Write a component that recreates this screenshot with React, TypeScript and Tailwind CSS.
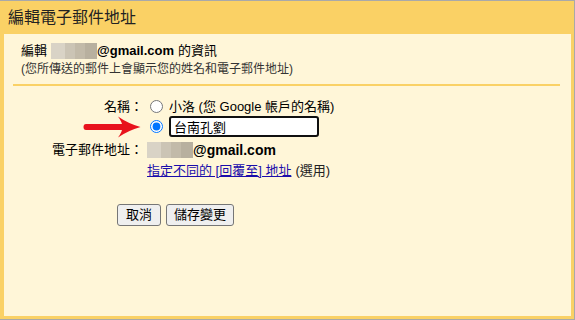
import { useState } from "react";

const font = "font-['Liberation_Sans','Noto_Sans_CJK_TC',sans-serif]";

function Blur({ className }: { className?: string }) {
  return (
    <span className={`inline-flex h-[16px] w-[46px] align-middle ${className ?? ""}`}>
      <span className="h-full w-[14px] bg-[#d9d3c6]" />
      <span className="h-full w-[10px] bg-[#cbc4b5]" />
      <span className="h-full w-[10px] bg-[#c2baa9]" />
      <span className="h-full w-[12px] bg-[#b8b09f]" />
    </span>
  );
}

function Arrow() {
  return (
    <svg width="58" height="22" viewBox="0 0 58 22" className="block">
      <path d="M3 8 L40 8 L40 14 L3 14 Q0.5 14 0.5 11 Q0.5 8 3 8 Z" fill="#e8121c" />
      <path d="M35 0.5 Q45 7.5 57.5 11 Q45 14.5 35 21.5 Q39.5 15.5 39.5 11 Q39.5 6.5 35 0.5 Z" fill="#e8121c" />
    </svg>
  );
}

export default function App() {
  const [choice, setChoice] = useState("custom");
  const [name, setName] = useState("台南孔劉");

  return (
    <div className={`flex h-[320px] w-[575px] flex-col border-y border-r border-[#a9a9a9] bg-[#fad165] pb-[3px] pl-[4px] pr-[3px] ${font}`}>
      {/* header */}
      <div className="flex h-[33px] shrink-0 items-center pl-[4px] text-[16px] text-[#222]">
        編輯電子郵件地址
      </div>

      <div className="flex-1 bg-[#fff6d8] pt-[8px]">
        {/* info */}
        <div className="px-[17px]">
          <div className="flex items-center text-[13px] leading-[17px] text-black">
            <span>編輯</span>
            <Blur className="ml-[4px]" />
            <span className="font-bold">@gmail.com</span>
            <span className="ml-[4px]">的資訊</span>
          </div>
          <div className="mt-[2px] text-[12px] leading-[16px] text-[#333]">
            (您所傳送的郵件上會顯示您的姓名和電子郵件地址)
          </div>
        </div>
        <div className="ml-[9px] mr-[11px] mt-[7px] h-[2px] bg-[#fad165]" />

        {/* form */}
        <div className="mt-[12px] grid grid-cols-[141px_1fr] text-[13px] text-black">
          <div className="flex h-[17px] items-center justify-end pr-[2px]">名稱：</div>
          <label className="flex h-[17px] items-center">
            <input
              type="radio"
              name="n"
              checked={choice === "account"}
              onChange={() => setChoice("account")}
              className="ml-[5px] h-[13px] w-[13px] accent-[#0075ff]"
            />
            <span className="ml-[6px]">小洛 (您 Google 帳戶的名稱)</span>
          </label>

          <div className="mt-[1px] flex h-[21px] items-center justify-end pr-[4px]">
            <Arrow />
          </div>
          <div className="mt-[1px] flex h-[21px] items-center">
            <input
              type="radio"
              name="n"
              checked={choice === "custom"}
              onChange={() => setChoice("custom")}
              className="ml-[5px] h-[13px] w-[13px] accent-[#0075ff]"
            />
            <input
              value={name}
              onChange={(e) => setName(e.target.value)}
              className="ml-[6px] h-[21px] w-[150px] rounded-[3px] border-2 border-[#101010] bg-white px-[3px] text-[13px] outline-none"
            />
          </div>

          <div className="mt-[4px] flex h-[18px] items-center justify-end pr-[2px]">電子郵件地址：</div>
          <div className="mt-[4px] flex h-[18px] items-center">
            <Blur className="ml-[2px]" />
            <span className="text-[14px] font-bold">@gmail.com</span>
          </div>

          <div />
          <div className="mt-[3px] flex h-[17px] items-center pl-[2px]">
            <a href="#" className="text-[#1a0dab] underline">指定不同的 [回覆至] 地址</a>
            <span className="ml-[4px] text-[#222]">(選用)</span>
          </div>
        </div>

        {/* buttons */}
        <div className="ml-[113px] mt-[25px] flex gap-[5px]">
          <button className="h-[22px] rounded-[3px] border border-[#767676] bg-[#efefef] px-[8px] text-[13px] text-black">
            取消
          </button>
          <button className="h-[22px] rounded-[3px] border border-[#767676] bg-[#efefef] px-[7px] text-[13px] text-black">
            儲存變更
          </button>
        </div>
      </div>
    </div>
  );
}
